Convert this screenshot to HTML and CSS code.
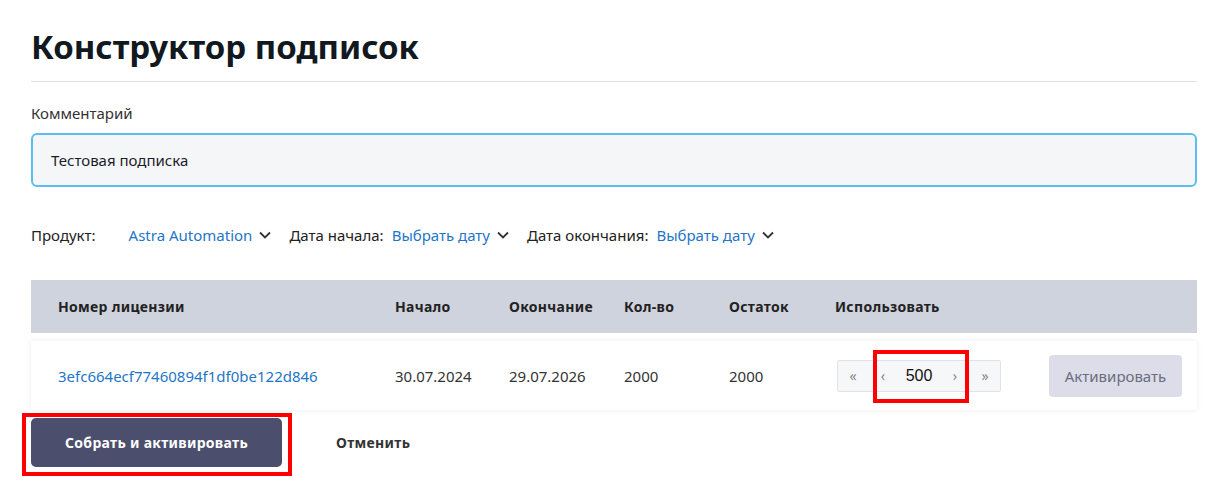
FILE: index.html
```html
<!DOCTYPE html>
<html lang="ru">
<head>
    <meta charset="UTF-8">
    <meta name="viewport" content="width=device-width, initial-scale=1.0">
    <title>Конструктор подписок</title>
    <link rel="stylesheet" href="styles.css">
</head>
<body>
    <div class="page">
        <h1 class="title">Конструктор подписок</h1>

        <label class="field-label">Комментарий</label>
        <div class="comment-input">Тестовая подписка</div>

        <div class="filters">
            <span class="filter-name product-name">Продукт:</span>
            <span class="filter-value">Astra Automation
                <svg class="chevron" viewBox="0 0 12 8" width="12" height="8"><path d="M1 1.5l5 5 5-5" fill="none" stroke="#333" stroke-width="1.8"/></svg>
            </span>
            <span class="filter-name">Дата начала:</span>
            <span class="filter-value">Выбрать дату
                <svg class="chevron" viewBox="0 0 12 8" width="12" height="8"><path d="M1 1.5l5 5 5-5" fill="none" stroke="#333" stroke-width="1.8"/></svg>
            </span>
            <span class="filter-name">Дата окончания:</span>
            <span class="filter-value">Выбрать дату
                <svg class="chevron" viewBox="0 0 12 8" width="12" height="8"><path d="M1 1.5l5 5 5-5" fill="none" stroke="#333" stroke-width="1.8"/></svg>
            </span>
        </div>

        <div class="table">
            <div class="table-head">
                <div>Номер лицензии</div>
                <div>Начало</div>
                <div>Окончание</div>
                <div>Кол-во</div>
                <div>Остаток</div>
                <div>Использовать</div>
            </div>
            <div class="table-row">
                <div><a class="license" href="#">3efc664ecf77460894f1df0be122d846</a></div>
                <div>30.07.2024</div>
                <div>29.07.2026</div>
                <div>2000</div>
                <div>2000</div>
                <div class="use-cell">
                    <div class="stepper">
                        <span class="step">&laquo;</span>
                        <span class="step">&lsaquo;</span>
                        <span class="step-value">500</span>
                        <span class="step">&rsaquo;</span>
                        <span class="step">&raquo;</span>
                        <span class="highlight stepper-mark"></span>
                    </div>
                    <button class="btn-activate">Активировать</button>
                </div>
            </div>
        </div>

        <div class="actions">
            <div class="submit-wrap">
                <button class="btn-primary">Собрать и активировать</button>
                <span class="highlight submit-mark"></span>
            </div>
            <button class="btn-cancel">Отменить</button>
        </div>
    </div>
</body>
</html>
```

FILE: styles.css
```css
body {
    margin: 0;
    font-family: "Noto Sans", "Open Sans", sans-serif;
    color: #222;
    background: white;
}
.page {
    padding: 26px 20px 30px 31px;
}
.title {
    margin: 0;
    font-size: 33px;
    font-weight: 700;
    color: #111820;
    line-height: 42px;
    padding-bottom: 13px;
    border-bottom: 1px solid #e2e2e2;
}
.field-label {
    display: block;
    margin-top: 21px;
    font-size: 15px;
    color: #333;
    line-height: 20px;
}
.comment-input {
    margin-top: 10px;
    height: 50px;
    border: 2px solid #5cbdf0;
    border-radius: 6px;
    background: #f5f6f8;
    padding: 0 18px;
    font-size: 15px;
    line-height: 50px;
    color: #1c1c2a;
}
.filters {
    display: flex;
    align-items: center;
    margin-top: 36px;
    font-size: 15px;
    line-height: 24px;
    color: #222;
}
.filter-name {
    margin-right: 8px;
}
.product-name {
    margin-right: 33px;
}
.filter-value {
    color: #1f76c6;
    margin-right: 18px;
    display: flex;
    align-items: center;
}
.chevron {
    margin-left: 7px;
}
.table {
    margin-top: 33px;
}
.table-head,
.table-row {
    display: grid;
    grid-template-columns: 337px 114px 115px 105px 106px 1fr;
    align-items: center;
    padding-left: 27px;
}
.table-head {
    height: 53px;
    background: #cfd3de;
    font-size: 14px;
    font-weight: 700;
    letter-spacing: 0.3px;
    color: #222;
}
.table-row {
    margin-top: 8px;
    height: 69px;
    background: white;
    box-shadow: 0 0 6px rgba(0, 0, 0, 0.08);
    font-size: 15px;
    color: #333;
    padding-right: 15px;
}
.license {
    color: #1f76c6;
    text-decoration: none;
}
.use-cell {
    display: flex;
    align-items: center;
    justify-content: space-between;
    padding-left: 2px;
}
.stepper {
    position: relative;
    display: flex;
    align-items: center;
    width: 162px;
    height: 30px;
    border: 1px solid #e1e3ea;
    border-radius: 2px;
    background: #f6f7f9;
    font-size: 15px;
}
.step {
    width: 30px;
    text-align: center;
    color: #888;
    font-size: 14px;
}
.step-value {
    width: 42px;
    text-align: center;
    color: #111;
    font-family: "Liberation Sans", Arial, sans-serif;
    font-size: 16px;
}
.btn-activate {
    width: 133px;
    height: 42px;
    border: none;
    border-radius: 4px;
    background: #dcdde8;
    color: #6b6c80;
    font-family: inherit;
    font-size: 15px;
}
.actions {
    display: flex;
    align-items: center;
    margin-top: 8px;
}
.submit-wrap {
    position: relative;
    display: flex;
}
.btn-primary {
    width: 251px;
    height: 49px;
    border: none;
    border-radius: 5px;
    background: #4b4e6d;
    color: white;
    font-family: inherit;
    font-size: 14px;
    font-weight: 700;
    letter-spacing: 0.3px;
}
.btn-cancel {
    margin-left: 54px;
    padding: 0;
    border: none;
    background: none;
    font-family: inherit;
    font-size: 14px;
    font-weight: 700;
    letter-spacing: 0.3px;
    color: #333;
}
.highlight {
    position: absolute;
    border: 4px solid #f00;
    box-sizing: border-box;
}
.stepper-mark {
    left: 35px;
    top: -11px;
    width: 96px;
    height: 53px;
}
.submit-mark {
    left: -9px;
    top: -5px;
    width: 270px;
    height: 63px;
}
```
